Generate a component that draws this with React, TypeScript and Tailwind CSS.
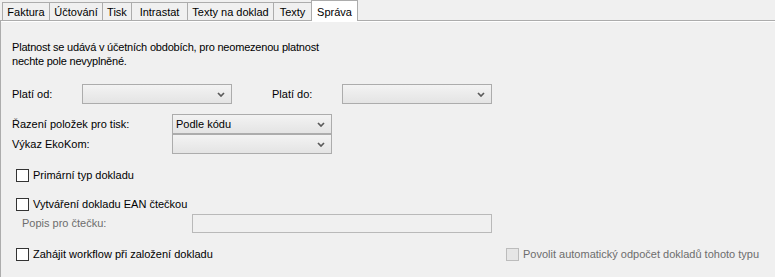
const tabs = [
  { label: "Faktura", w: 47 },
  { label: "Účtování", w: 53 },
  { label: "Tisk", w: 29 },
  { label: "Intrastat", w: 56 },
  { label: "Texty na doklad", w: 86 },
  { label: "Texty", w: 38 },
];

function Chevron() {
  return (
    <svg width="8" height="5" viewBox="0 0 8 5">
      <path d="M1 1 L4 4 L7 1" stroke="#5a5a5a" strokeWidth="1.7" fill="none" />
    </svg>
  );
}

function Combo({ w, value }: { w: number; value?: string }) {
  return (
    <div
      className="flex items-center justify-between h-[20px] border border-[#acacac] bg-linear-to-b from-[#f3f3f3] to-[#e4e4e4] pl-[3px] pr-[6px]"
      style={{ width: w }}
    >
      <span>{value}</span>
      <Chevron />
    </div>
  );
}

function Check({ label, disabled }: { label: string; disabled?: boolean }) {
  return (
    <div className="flex items-center h-[13px]">
      <div
        className={
          disabled
            ? "w-[13px] h-[13px] border border-[#bcbcbc] bg-[#e6e6e6]"
            : "w-[13px] h-[13px] border border-[#333333] bg-white"
        }
      />
      <span className={disabled ? "ml-[4px] text-[#6d6d6d]" : "ml-[4px]"}>{label}</span>
    </div>
  );
}

export default function App() {
  return (
    <div className="w-[775px] h-[277px] overflow-hidden bg-[#f0f0f0] text-[11px] text-black font-['Liberation_Sans',Arial,sans-serif]">
      {/* Tabs */}
      <div className="flex items-end h-[20px] pl-[2px]">
        {tabs.map((t) => (
          <div
            key={t.label}
            className="h-[18px] flex items-center justify-center border-t border-l border-[#acacac] bg-[#f0f0f0] pt-[1px]"
            style={{ width: t.w }}
          >
            {t.label}
          </div>
        ))}
        <div className="relative z-10 h-[21px] w-[47px] -mb-[1px] flex items-start justify-center pt-[3px] border-x border-t border-[#acacac] bg-white">
          Správa
        </div>
      </div>

      {/* Panel */}
      <div className="border-t border-l border-[#acacac] h-full">
        <div className="border-t border-white px-[11px]">
          <p className="mt-[18px] leading-[14px] tracking-[-0.2px]">
            Platnost se udává v účetních obdobích, pro neomezenou platnost
            <br />
            nechte pole nevyplněné.
          </p>

          <div className="mt-[16px] flex items-center">
            <span className="w-[70px]">Platí od:</span>
            <Combo w={150} />
            <span className="ml-[40px] w-[70px]">Platí do:</span>
            <Combo w={150} />
          </div>

          <div className="mt-[10px] flex items-center">
            <span className="w-[160px]">Řazení položek pro tisk:</span>
            <Combo w={160} value="Podle kódu" />
          </div>
          <div className="flex items-center">
            <span className="w-[160px]">Výkaz EkoKom:</span>
            <Combo w={160} />
          </div>

          <div className="mt-[15px] ml-[4px]">
            <Check label="Primární typ dokladu" />
          </div>

          <div className="mt-[16px] ml-[4px]">
            <Check label="Vytváření dokladu EAN čtečkou" />
          </div>
          <div className="mt-[3px] ml-[10px] flex items-center">
            <span className="w-[170px] text-[#6d6d6d]">Popis pro čtečku:</span>
            <div className="w-[300px] h-[19px] border border-[#b9b9b9] bg-[#f0f0f0]" />
          </div>

          <div className="mt-[15px] flex items-center">
            <div className="w-[494px] pl-[4px]">
              <Check label="Zahájit workflow při založení dokladu" />
            </div>
            <Check label="Povolit automatický odpočet dokladů tohoto typu" disabled />
          </div>
        </div>
      </div>
    </div>
  );
}
